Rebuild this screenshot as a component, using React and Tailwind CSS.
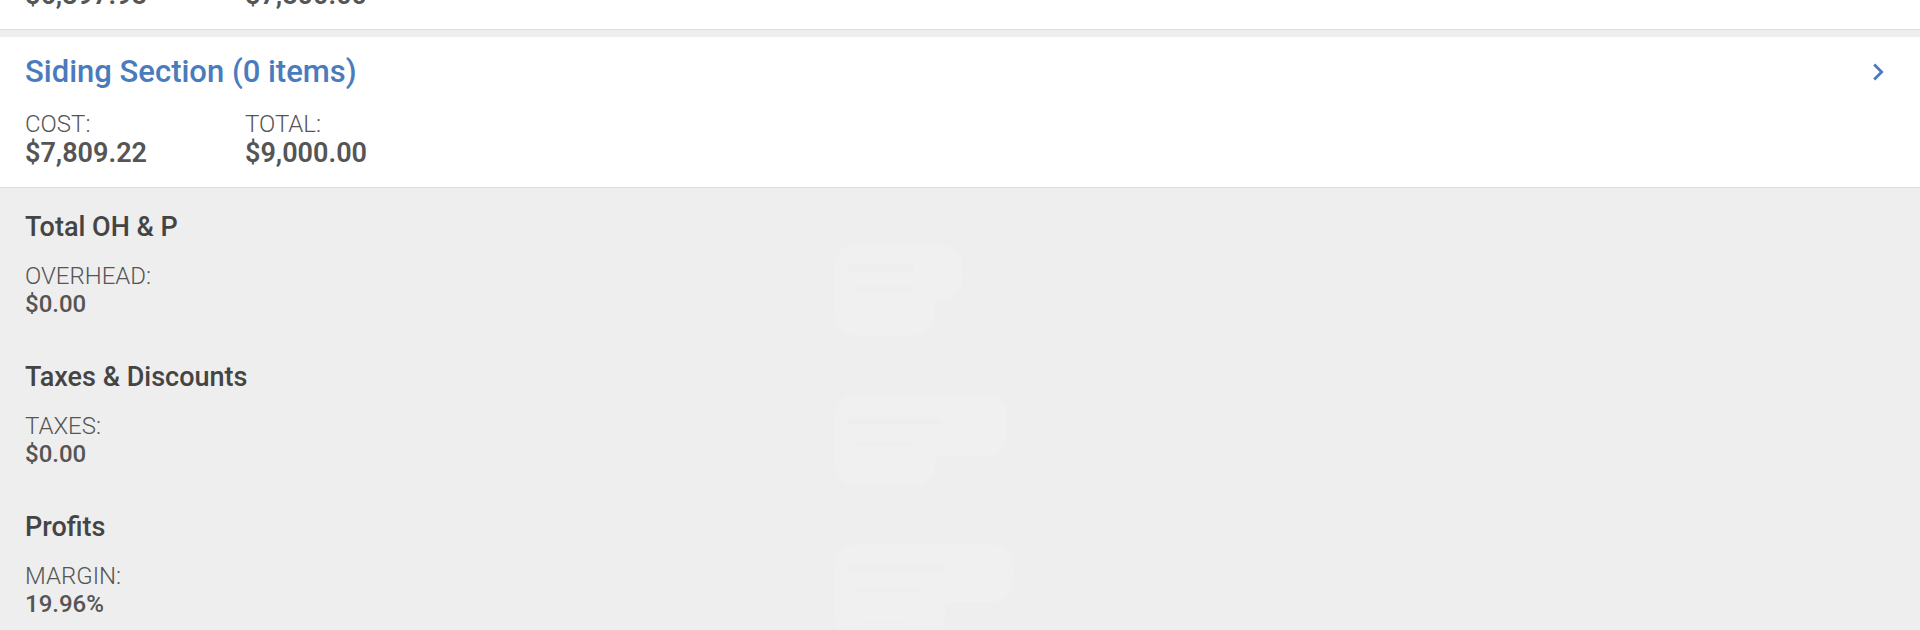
import React from "react";

function Chevron() {
  return (
    <svg width="34" height="34" viewBox="0 0 24 24" className="shrink-0">
      <path d="M10 6L8.59 7.41 13.17 12l-4.58 4.59L10 18l6-6z" fill="#4a7bbd" />
    </svg>
  );
}

function Watermark({ w, upperH, lowerW, h }) {
  return (
    <svg width={w} height={h} viewBox={`0 0 ${w} ${h}`} className="shrink-0">
      <rect x="0" y="0" width={w} height={upperH} rx="20" fill="#f0f0f0" />
      <rect x="0" y="10" width={lowerW} height={h - 10} rx="20" fill="#f0f0f0" />
      <path d={`M16 ${upperH * 0.42} H${w * 0.6}`} stroke="#eeeeee" strokeWidth="7" strokeLinecap="round" />
      <path d={`M24 ${upperH * 0.8} H${lowerW * 0.75}`} stroke="#eeeeee" strokeWidth="5" strokeLinecap="round" />
      <path d={`M30 ${h - 18} H${lowerW * 0.6}`} stroke="#efefef" strokeWidth="4" strokeLinecap="round" />
    </svg>
  );
}

function Stat({ label, value }) {
  return (
    <div className="w-[220px] flex flex-col">
      <div className="leading-[30px] text-[24px] font-light text-[#555555]">{label}</div>
      <div className="leading-[28px] text-[27px] font-semibold text-[#555555]">{value}</div>
    </div>
  );
}

function Section({ title, label, value, wm }) {
  return (
    <div className="flex h-[150px]">
      <div className="w-[810px] flex flex-col">
        <div className="leading-[34px] text-[27px] font-medium text-[#444444]">{title}</div>
        <div className="mt-[18px] leading-[28px] text-[24px] font-light text-[#555555]">{label}</div>
        <div className="leading-[28px] text-[24px] font-medium text-[#555555]">{value}</div>
      </div>
      <div className="mt-[35px]">{wm}</div>
    </div>
  );
}

export default function App() {
  return (
    <div
      className="w-[1920px] h-[630px] overflow-hidden bg-[#eeeeee]"
      style={{ fontFamily: "Roboto, 'Noto Sans', sans-serif" }}
    >
      {/* previous card, cut off at top */}
      <div className="h-[30px] bg-white border-b border-[#dedede] overflow-hidden px-[25px]">
        <div className="flex mt-[-49px]">
          <Stat label="COST:" value="$6,397.98" />
          <Stat label="TOTAL:" value="$7,800.00" />
        </div>
      </div>

      {/* Siding section card */}
      <div className="mt-[7px] h-[151px] bg-white border-b border-[#dedede] px-[25px] pt-[18px]">
        <div className="flex items-center justify-between">
          <div className="leading-[34px] text-[31px] font-medium text-[#4a7bbd]">Siding Section (0 items)</div>
          <Chevron />
        </div>
        <div className="flex mt-[20px]">
          <Stat label="COST:" value="$7,809.22" />
          <Stat label="TOTAL:" value="$9,000.00" />
        </div>
      </div>

      {/* Summary */}
      <div className="px-[25px] pt-[22px] flex flex-col">
        <Section
          title="Total OH & P"
          label="OVERHEAD:"
          value="$0.00"
          wm={<Watermark w={127} upperH={55} lowerW={100} h={90} />}
        />
        <Section
          title="Taxes & Discounts"
          label="TAXES:"
          value="$0.00"
          wm={<Watermark w={172} upperH={62} lowerW={100} h={90} />}
        />
        <Section
          title="Profits"
          label="MARGIN:"
          value="19.96%"
          wm={<Watermark w={178} upperH={57} lowerW={110} h={95} />}
        />
      </div>
    </div>
  );
}
